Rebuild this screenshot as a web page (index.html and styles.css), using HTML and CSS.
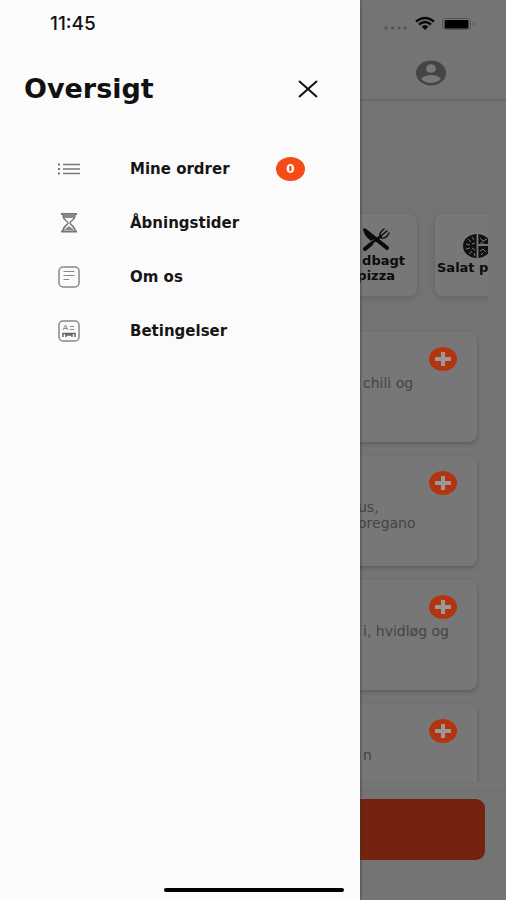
FILE: index.html
```html
<!DOCTYPE html>
<html lang="da">
<head>
<meta charset="utf-8">
<meta name="viewport" content="width=device-width, initial-scale=1">
<title>Oversigt</title>
<link rel="stylesheet" href="styles.css">
</head>
<body>
<div class="app">
  <aside class="drawer">
    <div class="clock">11:45</div>
    <header class="drawer-head">
      <h1>Oversigt</h1>
      <button class="close" type="button" aria-label="Luk">
        <svg width="22" height="18" viewBox="0 0 22 18"><path d="M2 1 20 17M20 1 2 17" fill="none" stroke="#111" stroke-width="2"/></svg>
      </button>
    </header>
    <nav class="menu">
      <a href="#ordrer">
        <svg width="22" height="22" viewBox="0 0 22 22" stroke="#777" fill="none"><path d="M5 6.500H22M5 11H22M5 15.500H22" stroke-width="1.500"/><path d="M0 6.500H2M0 11H2M0 15.500H2" stroke-width="2"/></svg>
        <span>Mine ordrer</span><b class="count">0</b>
      </a>
      <a href="#tider">
        <svg width="22" height="22" viewBox="0 0 22 22" stroke="#777" fill="none" stroke-width="1.500"><path d="M3 2H19M3 19.500H19" stroke-width="2"/><path d="M5 2V4C5 8 10 9 10 11S5 14 5 19M17 2V4C17 8 12 9 12 11S17 14 17 19"/><path d="M5 2H17L16 6H6ZM6 18 11 14 16 18Z" fill="#888" stroke="none"/></svg>
        <span>Åbningstider</span>
      </a>
      <a href="#om">
        <svg width="22" height="22" viewBox="0 0 22 22" stroke="#888" fill="none"><rect x="1" y="1" width="20" height="20" rx="4" stroke-width="1.500"/><path d="M5.500 5.500H16.500M5.500 9.500H16.500M5.500 13.500H11"/></svg>
        <span>Om os</span>
      </a>
      <a href="#betingelser">
        <svg width="22" height="22" viewBox="0 0 22 22" stroke="#888" fill="none"><rect x="1" y="1" width="20" height="20" rx="4" stroke-width="1.500"/><path d="M5 10 7.500 5 10 10M6 8.500H9M12 6.500H16M12 9.500H16"/><path d="M5 17V13.500H17V17M8 14V17M14 14V17M8 15H14" stroke="#666" stroke-width="1.500"/></svg>
        <span>Betingelser</span>
      </a>
    </nav>
    <div class="home-bar"></div>
  </aside>

  <main class="page">
    <div class="status">
      <svg width="94" height="18" viewBox="0 0 94 18">
        <g fill="#505050"><circle cx="3" cy="13" r="1.500"/><circle cx="9.500" cy="13" r="1.500"/><circle cx="16" cy="13" r="1.500"/><circle cx="22" cy="13" r="1.500"/></g>
        <g fill="none" stroke="#080808" stroke-width="2.400"><path d="M33 6.500Q42 -.5 51 6.500"/><path d="M36 9.500Q42 4.500 48 9.500"/></g>
        <path d="M38.500 11.500Q42 8.500 45.500 11.500L42 15Z" fill="#080808"/>
        <rect x="59.500" y="3.500" width="28" height="11" rx="3" fill="none" stroke="#555"/>
        <rect x="61.500" y="5" width="24" height="8.500" rx="1.500" fill="#000"/>
        <path d="M90 7Q93 9 90 11Z" fill="#555"/>
      </svg>
    </div>
    <header class="topbar">
      <button type="button" aria-label="Profil">
        <svg width="30" height="26" viewBox="0 0 30 26"><ellipse cx="15" cy="13" rx="15" ry="12.500" fill="#444"/><ellipse cx="15" cy="8.500" rx="5" ry="4.300" fill="#777"/><path d="M5 19Q8 15 15 15T25 19Q21 23 15 23T5 19Z" fill="#777"/></svg>
      </button>
    </header>
    <section class="categories">
      <article class="category wide">
        <svg width="28" height="24" viewBox="0 0 28 24"><g fill="none" stroke="#0b0b0b" stroke-linecap="round"><path d="M3 3 25 20.500" stroke-width="3"/><path d="M15 13 25 21" stroke-width="4"/><path d="M3 22 9 17" stroke-width="4"/><path d="M7 18 19 9" stroke-width="2.500"/><path d="M18 9Q17 6 22 2M20 8 25 4M19 11Q24 12 27 6" stroke-width="1.400"/></g><path d="M1 1Q1 8 9 14L14 11Z" fill="#0b0b0b"/></svg>
        <span>dbagt</span><span>pizza</span>
      </article>
      <article class="category salad">
        <svg width="28" height="24" viewBox="0 0 28 24"><ellipse cx="14" cy="12" rx="14" ry="12" fill="#111"/><g fill="none" stroke="#777"><path d="M14.500 0V24M14 11H28" stroke-width="1.800"/><path d="M5 5 8 8M9 3 11 6M3 10 7 11M9 10 12 9M3 15 7 14M9 14 12 16M6 20 9 17M11 19 12 22M17 4 20 7 24 5M17 9 21 9M17 17 20 15 23 18M18 21 20 19"/></g></svg>
        <span>Salat p</span>
      </article>
    </section>
    <section class="dishes">
      <article class="dish"><button type="button" aria-label="Tilføj"><svg viewBox="0 0 28 24"><ellipse cx="14" cy="12" rx="14" ry="12"/><path d="M14 5V19M6 12H22"/></svg></button><p>chili og</p></article>
      <article class="dish clipped"><button type="button" aria-label="Tilføj"><svg viewBox="0 0 28 24"><ellipse cx="14" cy="12" rx="14" ry="12"/><path d="M14 5V19M6 12H22"/></svg></button><p>us,<br>oregano</p></article>
      <article class="dish"><button type="button" aria-label="Tilføj"><svg viewBox="0 0 28 24"><ellipse cx="14" cy="12" rx="14" ry="12"/><path d="M14 5V19M6 12H22"/></svg></button><p>i, hvidløg og</p></article>
      <article class="dish"><button type="button" aria-label="Tilføj"><svg viewBox="0 0 28 24"><ellipse cx="14" cy="12" rx="14" ry="12"/><path d="M14 5V19M6 12H22"/></svg></button><p>n</p></article>
    </section>
    <footer><button class="basket" type="button" aria-label="Kurv"></button></footer>
  </main>
</div>
</body>
</html>
```
FILE: styles.css
```css
* { box-sizing: border-box; }
body { margin: 0; background: #747474; color: #111; font-family: "DejaVu Sans", sans-serif; }
h1, p { margin: 0; }
button { padding: 0; border: 0; background: none; display: block; }
svg { display: block; flex: none; }
.app { display: flex; height: 100vh; overflow: hidden; }

.drawer { position: relative; z-index: 1; flex: 0 0 360px; display: flex; flex-direction: column; background: #fbfbfb; box-shadow: 0 0 3px #333; }
.clock { padding: 12px 0 0 50px; font: 500 19px/24px Inter, sans-serif; height: 60px; }
.drawer-head { display: flex; align-items: center; justify-content: space-between; height: 58px; padding: 0 41px 0 24px; }
h1 { font-size: 27px; line-height: 32px; }
.menu { margin-top: 24px; }
.menu a { display: flex; align-items: center; height: 54px; padding: 0 55px 0 58px; color: #161616; font-size: 15px; font-weight: bold; text-decoration: none; }
.menu span { margin-left: 50px; }
.count { display: grid; place-items: center; width: 29px; height: 24px; margin-left: auto; border-radius: 50%; background: #f44b17; color: #fff; font-size: 12px; }
.home-bar { width: 180px; height: 4px; margin: auto 16px 8px auto; border-radius: 2px; background: #000; }

.page { flex: 1; min-width: 0; margin-left: -20px; display: flex; flex-direction: column; background: #747474; }
.status { display: flex; justify-content: flex-end; height: 48px; padding: 15px 29px 0 0; }
.topbar { display: flex; align-items: center; justify-content: flex-end; height: 53px; padding: 0 60px 2px 0; border-bottom: 2px solid #686868; }
.categories { display: flex; gap: 18px; margin: 105px 18px 0 0; overflow: hidden; padding: 8px 0; }
.category { display: flex; flex: none; flex-direction: column; height: 82px; border-radius: 8px; background: #777; box-shadow: 0 2px 6px #626262; color: #0c0c0c; font-size: 13px; font-weight: bold; line-height: 15px; }
.wide { width: 77px; padding: 13px 12px 0 0; align-items: flex-end; }
.wide svg { margin: 0 15px 2px 0; }
.wide span:last-child { margin-right: 10px; }
.salad { width: 100px; padding: 20px 2px; }
.salad svg { margin: 0 0 2px 26px; }
.dishes { flex: 1; min-height: 0; overflow: hidden; margin-top: 20px; padding: 8px 29px 0 0; }
.dish { height: 110px; margin-bottom: 14px; padding: 15px 0 0 23px; border-radius: 8px; background: #777; box-shadow: 0 2px 4px #5c5c5c; }
.dish button { width: 28px; height: 24px; margin: 0 20px 0 auto; }
.dish ellipse { fill: #b33510; }
.dish path { fill: none; stroke: #999; stroke-width: 4; }
.dish p { margin-top: 4px; color: #444; font-size: 14px; line-height: 16px; white-space: nowrap; }
.dish.clipped { padding-left: 18px; }
footer { height: 110px; margin-top: 8px; padding: 8px 21px 0 0; border-top: 1px solid #6e6e6e; }
.basket { width: 100%; height: 61px; border-radius: 9px; background: #75230f; }
```
